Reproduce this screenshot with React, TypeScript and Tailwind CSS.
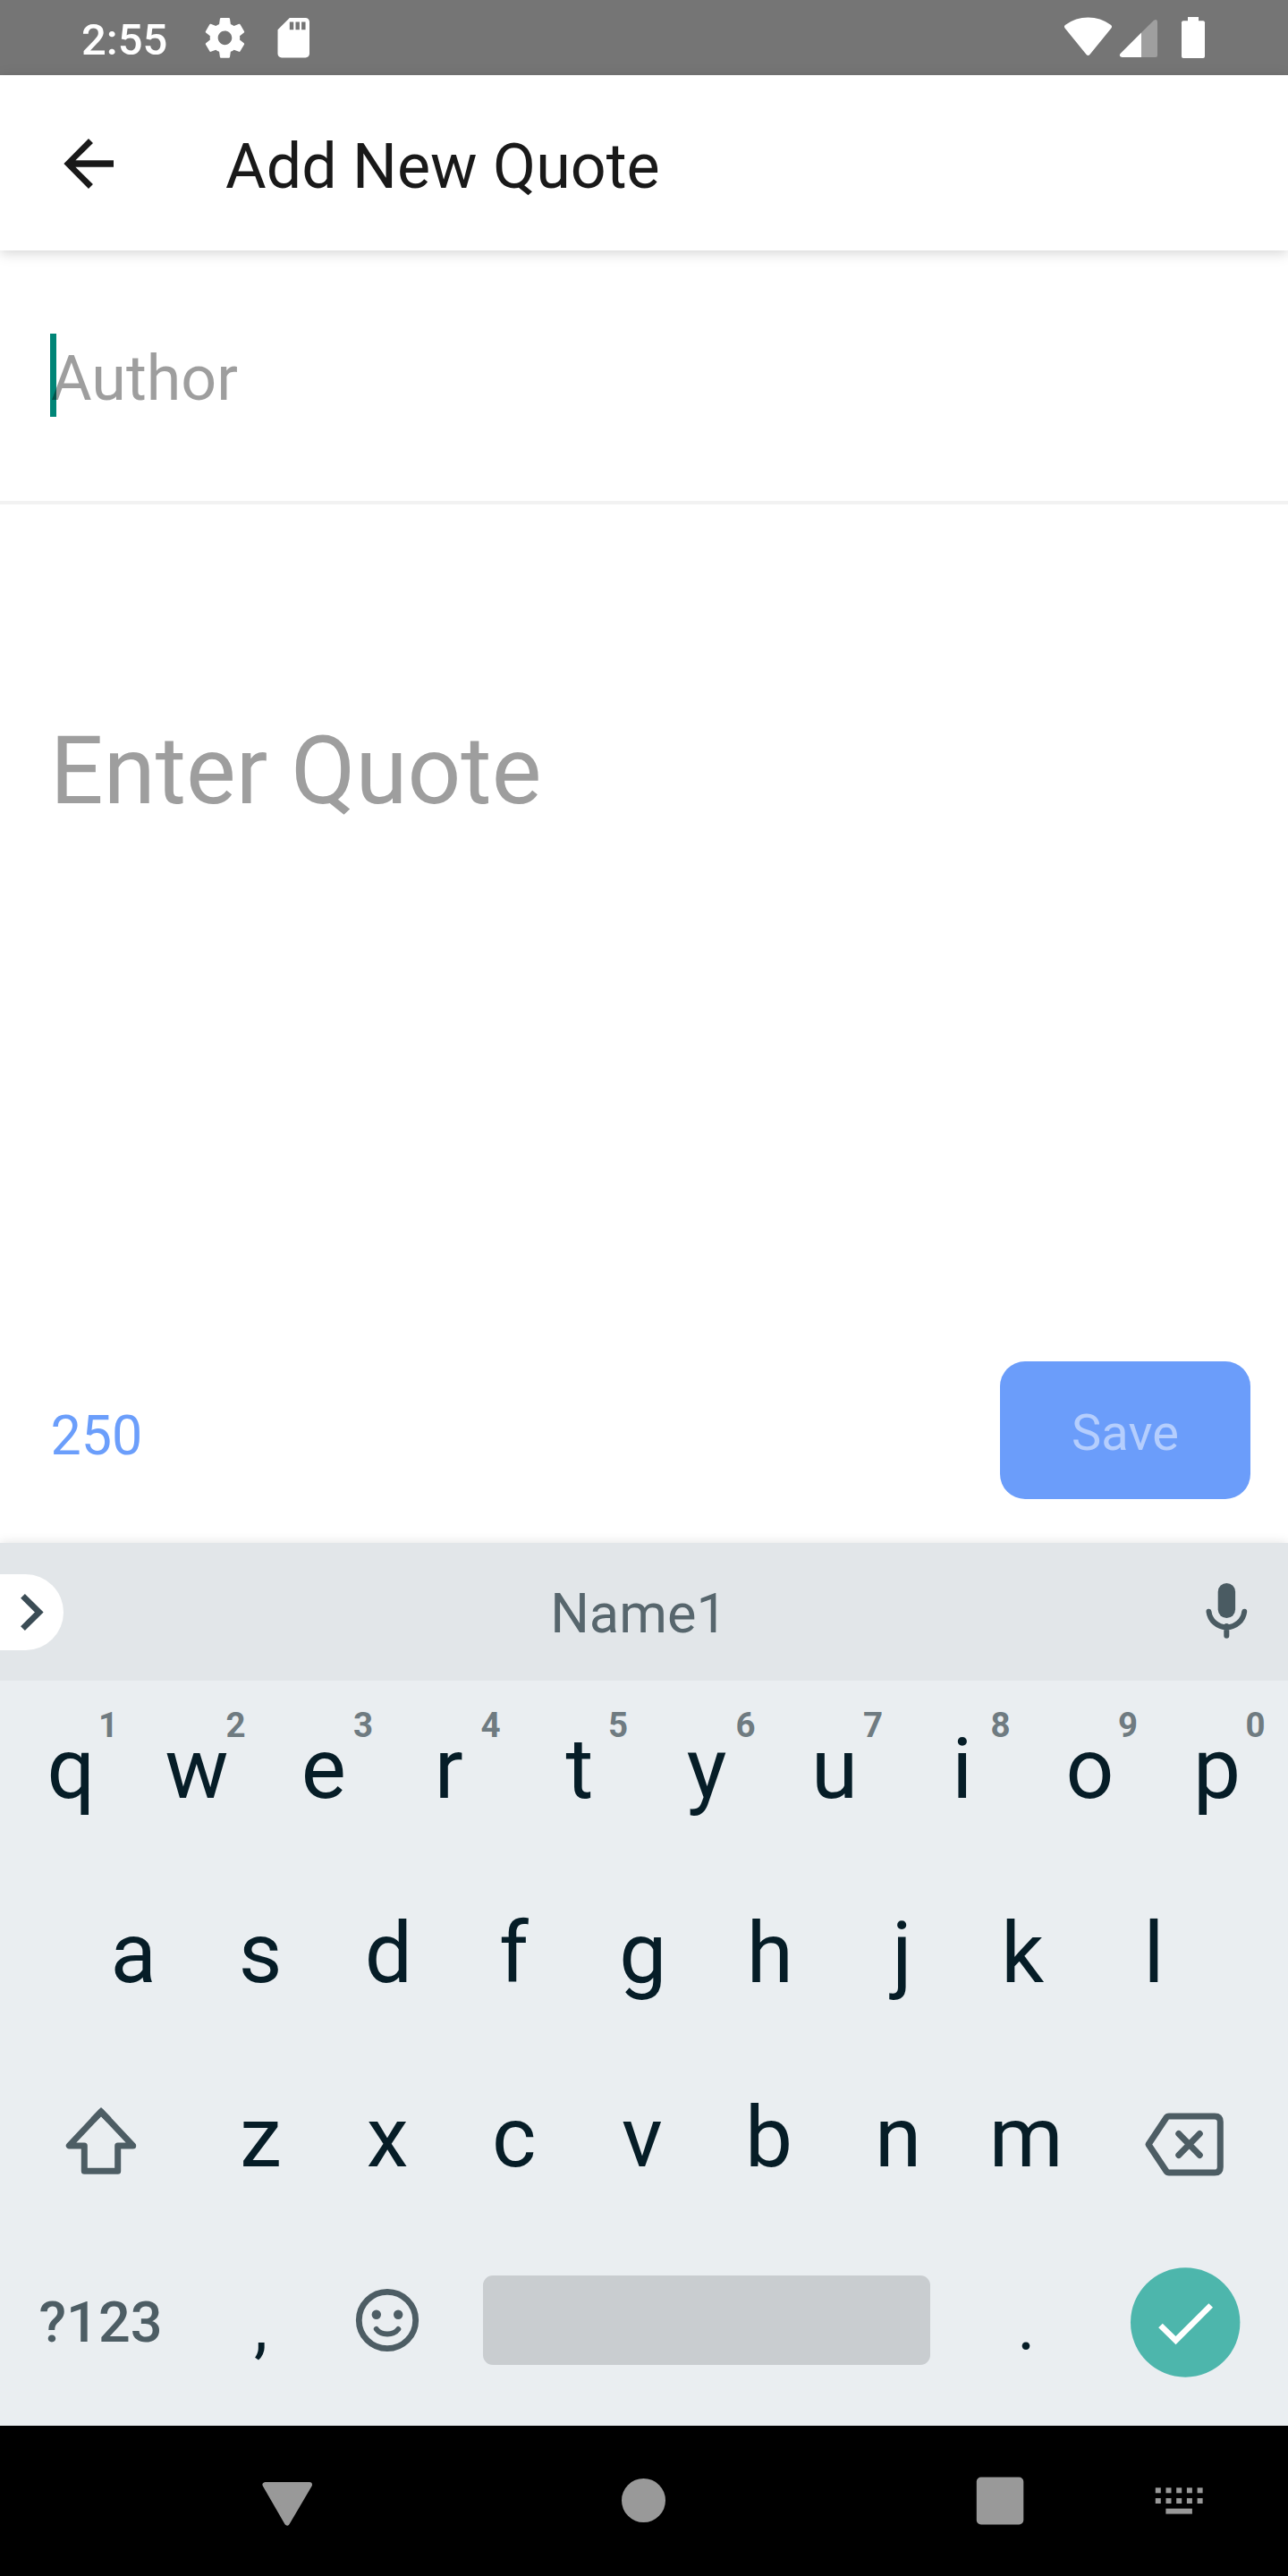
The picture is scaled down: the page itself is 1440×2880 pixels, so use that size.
import type { ReactNode } from 'react';

type DrawingProps = { x: number; y: number; w: number; h: number; className?: string; children: ReactNode };

/* Icon whose viewBox uses screen coordinates, so one unit is one pixel. */
function Drawing({ x, y, w, h, className = '', children }: DrawingProps) {
  return (
    <svg width={w} height={h} viewBox={`${x} ${y} ${w} ${h}`} className={`shrink-0 ${className}`} aria-hidden="true">
      {children}
    </svg>
  );
}

function StatusBar() {
  return (
    <div className="flex h-[84px] shrink-0 items-center bg-[#757575] pl-[91px] pr-[92px] text-white">
      <span className="w-[138px] pt-[5px] text-[49px] leading-[60px] font-medium">2:55</span>
      <Drawing x={229} y={0} w={46} h={84}>
        <path
          transform="translate(224.7 15.6) scale(2.23)"
          fill="#fff"
          d="M19.43 12.98c.04-.32.07-.64.07-.98s-.03-.66-.07-.98l2.11-1.65c.19-.15.24-.42.12-.64l-2-3.46c-.12-.22-.39-.3-.61-.22l-2.49 1c-.52-.4-1.08-.73-1.69-.98l-.38-2.65C14.46 2.18 14.25 2 14 2h-4c-.25 0-.46.18-.49.42l-.38 2.65c-.61.25-1.17.59-1.69.98l-2.49-1c-.23-.09-.49 0-.61.22l-2 3.46c-.13.22-.07.49.12.64l2.11 1.65c-.04.32-.07.65-.07.98s.03.66.07.98l-2.11 1.65c-.19.15-.24.42-.12.64l2 3.46c.12.22.39.3.61.22l2.49-1c.52.4 1.08.73 1.69.98l.38 2.65c.03.24.24.42.49.42h4c.25 0 .46-.18.49-.42l.38-2.65c.61-.25 1.17-.59 1.69-.98l2.49 1c.23.09.49 0 .61-.22l2-3.46c.12-.22.07-.49-.12-.64l-2.11-1.65zM12 15.5c-1.93 0-3.5-1.57-3.5-3.5s1.57-3.5 3.5-3.5 3.5 1.57 3.5 3.5-1.57 3.5-3.5 3.5z"
        />
      </Drawing>
      <Drawing x={310} y={0} w={37} h={84} className="ml-[35px]">
        <path
          transform="translate(301.6 15.6) scale(2.22)"
          fill="#fff"
          d="M18 2h-8L4.02 8 4 20c0 1.1.9 2 2 2h12c1.1 0 2-.9 2-2V4c0-1.1-.9-2-2-2zm-6 6h-2V4h2v4zm3 0h-2V4h2v4zm3 0h-2V4h2v4z"
        />
      </Drawing>
      <div className="flex-1" />
      <Drawing x={1190} y={0} w={54} h={84}>
        <path fill="#fff" d="M1190.6 31.5Q1189 29.2 1191.2 27.7Q1202.5 19.4 1216.5 19.4Q1230.500 19.4 1241.8 27.7Q1244 29.200 1242.400 31.500L1218.600 60.800Q1216.500 63.200 1214.400 60.800Z" />
      </Drawing>
      <Drawing x={1251} y={0} w={44} h={84} className="ml-[7px]">
        <path fill="#9f9f9f" d="M1276 36.500L1290 22.800Q1294 20.500 1294 24.500V62Q1294 64 1292 64H1276Z" />
        <path fill="#fff" d="M1276 36.500V64H1254.500Q1250.500 63.500 1252.500 60Z" />
      </Drawing>
      <Drawing x={1320} y={0} w={28} h={84} className="ml-[25px]">
        <rect x={1328} y={19} width={12} height={8} fill="#fff" />
        <rect x={1321} y={23.3} width={26} height={41.700} rx={2} fill="#fff" />
      </Drawing>
    </div>
  );
}

function Header() {
  return (
    <header className="relative z-10 flex h-[196px] shrink-0 items-center bg-white pl-[57px] shadow-[0_3px_14px_rgba(0,0,0,0.17)]">
      <svg width={84} height={84} viewBox="0 0 24 24" fill="#191919" className="mt-[2px] shrink-0">
        <path d="M20 10.900H7.830l5.590-5.490L12 4l-7.900 8 7.900 8 1.410-1.410L7.830 13.100H20z" />
      </svg>
      <h1 className="ml-[111px] pt-[8px] text-[70px] leading-[84px] font-normal text-[#191919]">Add New Quote</h1>
    </header>
  );
}

function QuoteForm() {
  return (
    <main className="flex h-[1445px] shrink-0 flex-col bg-white">
      <div className="flex h-[284px] shrink-0 items-center border-b-4 border-[#f2f2f2] pl-[56px]">
        <div className="relative">
          <div className="absolute top-[-8px] left-0 h-[93px] w-[7px] bg-[#008577]" />
          <div className="relative pt-[6px] pl-px text-[70px] leading-[72px] text-black/38">Author</div>
        </div>
      </div>
      <div className="flex-1 pt-[237px] pl-[56px] text-[105px] leading-[124px] text-[#9e9e9e]">Enter Quote</div>
      <div className="mb-[49px] flex h-[154px] shrink-0 items-center justify-between pr-[42px] pl-[56px]">
        <span className="pt-[12px] pl-[0.5px] text-[61px] leading-[72px] text-[#6b9efb]">250</span>
        <button className="h-[154px] w-[280px] rounded-[28px] bg-[#6b9dfa] pt-[6px] text-[56px] leading-none text-[#b5cefd]">
          Save
        </button>
      </div>
    </main>
  );
}

function SuggestionBar() {
  return (
    <div className="flex h-[154px] shrink-0 items-center bg-[#e2e6e9]">
      <div className="flex h-[85px] w-[71px] items-center rounded-r-full bg-white">
        <Drawing x={0} y={1759} w={71} h={85}>
          <path d="M25.500 1783.300L43.800 1801.500L25.500 1819.700" fill="none" stroke="#3b4c55" strokeWidth={6.800} />
        </Drawing>
      </div>
      <span className="flex-1 pt-[4px] pl-[17px] text-center text-[61.250px] leading-[72px] text-[#57666d]">Name1</span>
      <Drawing x={1340} y={1725} w={100} h={154}>
        <rect x={1361.700} y={1770} width={19.400} height={39} rx={9.700} fill="#4a5b62" />
        <path
          d="M1351.500 1801.800A20 20 0 0 0 1391.200 1801.800M1371.300 1818V1828.700"
          fill="none"
          stroke="#4a5b62"
          strokeWidth={6}
          strokeLinecap="round"
        />
      </Drawing>
    </div>
  );
}

type KeyDef = { label: string; shift: number };

function Key({ label, shift, hint }: KeyDef & { hint?: string }) {
  return (
    <div className="relative flex h-[206px] w-[142.500px] items-center justify-center pb-[7px] text-[94.500px] leading-none text-[#061d27]">
      <span style={{ transform: `translateX(${shift}px)` }}>{label}</span>
      {hint && (
        <span className="absolute top-[31px] right-[18px] text-[38.500px] leading-none font-bold text-[#6f7b81]">{hint}</span>
      )}
    </div>
  );
}

const TOP_ROW: KeyDef[] = [
  { label: 'q', shift: 0.5 },
  { label: 'w', shift: -1.2 },
  { label: 'e', shift: -2 },
  { label: 'r', shift: -4.5 },
  { label: 't', shift: -0.7 },
  { label: 'y', shift: -1.2 },
  { label: 'u', shift: -0.7 },
  { label: 'i', shift: -0.4 },
  { label: 'o', shift: -0.2 },
  { label: 'p', shift: -0.6 },
];
const HOME_ROW: KeyDef[] = [
  { label: 'a', shift: -0.7 },
  { label: 's', shift: -1.4 },
  { label: 'd', shift: -0.5 },
  { label: 'f', shift: -3 },
  { label: 'g', shift: -1.2 },
  { label: 'h', shift: -1.7 },
  { label: 'j', shift: 3.5 },
  { label: 'k', shift: -4.2 },
  { label: 'l', shift: 0 },
];
const BOTTOM_ROW: KeyDef[] = [
  { label: 'z', shift: -1 },
  { label: 'x', shift: -1.7 },
  { label: 'c', shift: -2.7 },
  { label: 'v', shift: -2 },
  { label: 'b', shift: -3 },
  { label: 'n', shift: -1 },
  { label: 'm', shift: -0.3 },
];

function Keyboard() {
  return (
    <div className="flex h-[833px] shrink-0 flex-col bg-[#eaeef1]">
      <div className="flex justify-center">
        {TOP_ROW.map((k, i) => (
          <Key key={k.label} label={k.label} shift={k.shift} hint={String((i + 1) % 10)} />
        ))}
      </div>
      <div className="flex justify-center">
        {HOME_ROW.map((k) => (
          <Key key={k.label} label={k.label} shift={k.shift} />
        ))}
      </div>
      <div className="flex justify-center">
        <Drawing x={7} y={2291} w={214} h={206}>
          <g fill="none" stroke="#4d5d64" strokeWidth={7} strokeLinejoin="round">
            <path d="M113 2361L77.300 2398.900H94.300V2427.300H131.700V2398.900H148.700L113 2361Z" />
            <path d="M104 2370.300L113 2361L122 2370.300" strokeLinejoin="miter" />
          </g>
        </Drawing>
        {BOTTOM_ROW.map((k) => (
          <Key key={k.label} label={k.label} shift={k.shift} />
        ))}
        <Drawing x={1219} y={2291} w={214} h={206}>
          <g fill="none" stroke="#4d5d64" strokeWidth={7} strokeLinejoin="round" strokeLinecap="round">
            <path d="M1284 2397.500L1304 2367.500Q1305 2366 1307 2366H1358Q1364.300 2366 1364.300 2372.300V2422.700Q1364.300 2429 1358 2429H1307Q1305 2429 1304 2427.500Z" />
            <path d="M1317.800 2385.500L1341.300 2409.500M1341.300 2385.500L1317.800 2409.500" />
          </g>
        </Drawing>
      </div>
      <div className="flex flex-1 pl-[7px]">
        <div className="w-[213px] pt-[64px] pr-[2px] text-center text-[63px] leading-[72px] font-medium text-[#4d5d64]">?123</div>
        <div className="w-[142px] pt-[56px] pl-px text-center text-[77px] leading-[96px] text-[#061d27]">,</div>
        <Drawing x={362} y={2497} w={142} h={215}>
          <circle cx={433} cy={2594} r={31.700} fill="none" stroke="#4d5d64" strokeWidth={6.800} />
          <circle cx={420.800} cy={2587.700} r={5.200} fill="#4d5d64" />
          <circle cx={445.200} cy={2587.700} r={5.200} fill="#4d5d64" />
          <path d="M420.800 2604Q425 2609.500 433 2609.500T445.300 2604" fill="none" stroke="#4d5d64" strokeWidth={6} strokeLinecap="round" />
        </Drawing>
        <div className="mt-[47px] ml-[36px] h-[100px] w-[500px] rounded-[11px] bg-[#c9cdd0]" />
        <div className="ml-[36px] w-[142px] pt-[56px] pl-px text-center text-[77px] leading-[96px] text-[#061d27]">.</div>
        <Drawing x={1218} y={2497} w={215} h={215}>
          <circle cx={1325.200} cy={2596.500} r={61.200} fill="#4db6ac" />
          <path d="M1297.500 2600L1314.500 2616.600L1353.700 2577.500" fill="none" stroke="#fff" strokeWidth={6.600} />
        </Drawing>
      </div>
    </div>
  );
}

const KEY_DOTS = [1291.800, 1303.500, 1315.200, 1326.900, 1338.600];

function NavigationBar() {
  return (
    <nav className="flex h-[168px] shrink-0 bg-black pl-[292px]">
      <Drawing x={292} y={2712} w={58} h={168}>
        <path d="M296.500 2778H346L321 2820.500Z" fill="#999" stroke="#999" strokeWidth={6} strokeLinejoin="round" />
      </Drawing>
      <Drawing x={694} y={2712} w={52} h={168} className="ml-[344px]">
        <circle cx={719.500} cy={2795.500} r={24.500} fill="#999" />
      </Drawing>
      <Drawing x={1090} y={2712} w={56} h={168} className="ml-[344px]">
        <rect x={1091.800} y={2769.500} width={52.500} height={53} rx={5} fill="#999" />
      </Drawing>
      <Drawing x={1290} y={2712} w={56} h={168} className="ml-[144px]">
        {KEY_DOTS.map((x) => (
          <g key={x} fill="#999">
            <rect x={x} y={2781.300} width={6} height={6} />
            <rect x={x} y={2793} width={6} height={6} />
          </g>
        ))}
        <rect x={1303.400} y={2804.600} width={29.500} height={6} fill="#999" />
      </Drawing>
    </nav>
  );
}

export default function App() {
  return (
    <div className="flex h-[2880px] w-[1440px] flex-col overflow-hidden bg-white font-['Roboto',sans-serif]">
      <StatusBar />
      <Header />
      <QuoteForm />
      <div className="relative shrink-0 shadow-[0_0_12px_rgba(0,0,0,0.12)]">
        <SuggestionBar />
        <Keyboard />
      </div>
      <NavigationBar />
    </div>
  );
}
